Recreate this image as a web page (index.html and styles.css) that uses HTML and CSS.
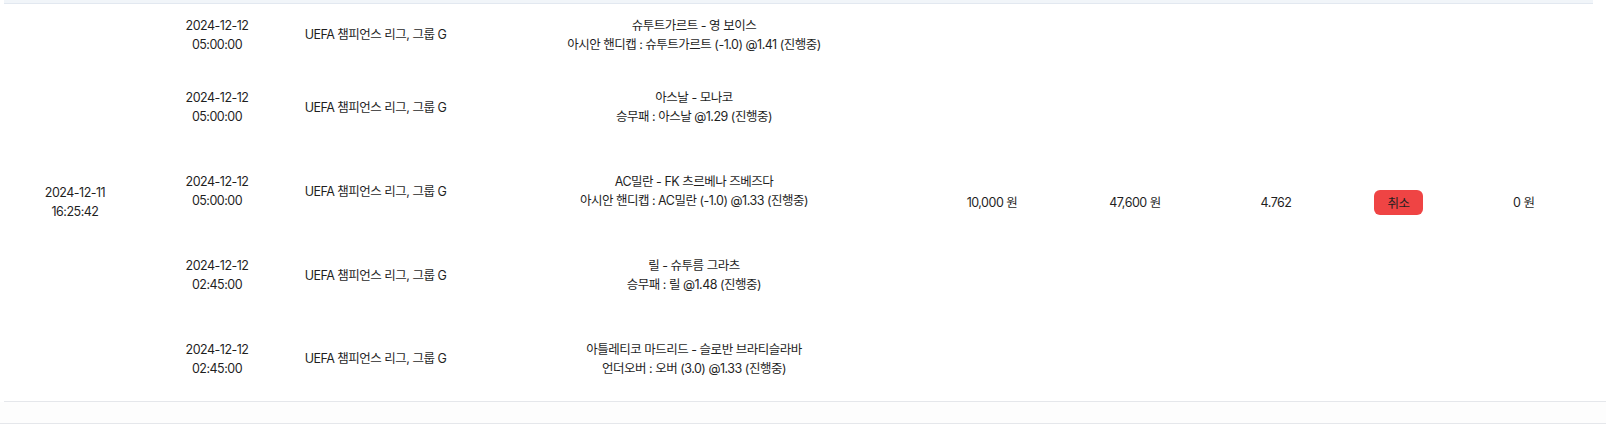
FILE: index.html
```html
<!DOCTYPE html>
<html lang="ko">
<head>
    <meta charset="UTF-8">
    <title>베팅 내역</title>
    <link rel="stylesheet" href="styles.css">
</head>
<body>
    <div class="history">
        <div class="head-edge"></div>
        <table class="bet-table">
            <colgroup>
                <col class="c-date">
                <col class="c-time">
                <col class="c-league">
                <col class="c-match">
                <col class="c-amount">
                <col class="c-win">
                <col class="c-odds">
                <col class="c-action">
                <col class="c-result">
            </colgroup>
            <tbody>
                <tr class="first">
                    <td rowspan="5">2024-12-11<br>16:25:42</td>
                    <td>2024-12-12<br>05:00:00</td>
                    <td>UEFA 챔피언스 리그, 그룹 G</td>
                    <td>슈투트가르트 - 영 보이스<br>아시안 핸디캡 : 슈투트가르트 (-1.0) @1.41 (진행중)</td>
                    <td rowspan="5">10,000 원</td>
                    <td rowspan="5">47,600 원</td>
                    <td rowspan="5">4.762</td>
                    <td rowspan="5"><button class="cancel-btn">취소</button></td>
                    <td rowspan="5" class="result">0 원</td>
                </tr>
                <tr>
                    <td>2024-12-12<br>05:00:00</td>
                    <td>UEFA 챔피언스 리그, 그룹 G</td>
                    <td>아스날 - 모나코<br>승무패 : 아스날 @1.29 (진행중)</td>
                </tr>
                <tr>
                    <td>2024-12-12<br>05:00:00</td>
                    <td>UEFA 챔피언스 리그, 그룹 G</td>
                    <td>AC밀란 - FK 츠르베나 즈베즈다<br>아시안 핸디캡 : AC밀란 (-1.0) @1.33 (진행중)</td>
                </tr>
                <tr>
                    <td>2024-12-12<br>02:45:00</td>
                    <td>UEFA 챔피언스 리그, 그룹 G</td>
                    <td>릴 - 슈투름 그라츠<br>승무패 : 릴 @1.48 (진행중)</td>
                </tr>
                <tr>
                    <td>2024-12-12<br>02:45:00</td>
                    <td>UEFA 챔피언스 리그, 그룹 G</td>
                    <td>아틀레티코 마드리드 - 슬로반 브라티슬라바<br>언더오버 : 오버 (3.0) @1.33 (진행중)</td>
                </tr>
            </tbody>
        </table>
    </div>
    <div class="footer-space"></div>
</body>
</html>
```

FILE: styles.css
```css
body {
    margin: 0;
    background: #fff;
    font-family: 'Inter', 'Noto Sans CJK KR', sans-serif;
    font-size: 12.5px;
    line-height: 19px;
    color: #1f1f1f;
    letter-spacing: -0.5px;
}

.history {
    margin-left: 4px;
    width: 1589px;
}

/* ujung bawah header tabel */
.head-edge {
    height: 3px;
    background-color: #f1f5f9;
    border-bottom: 1px solid #e2e8f0;
}

.bet-table {
    width: 100%;
    border-collapse: collapse;
    table-layout: fixed;
    border-bottom: 1px solid #e5e7eb;
}

.c-date { width: 142px; }
.c-time { width: 142px; }
.c-league { width: 175px; }
.c-match { width: 462px; }
.c-amount { width: 134px; }
.c-win { width: 152px; }
.c-odds { width: 130px; }
.c-action { width: 115px; }
.c-result { width: 187px; }

.bet-table td {
    padding: 0;
    text-align: center;
    vertical-align: middle;
    white-space: nowrap;
}

.bet-table tr {
    height: 84px;
}

.bet-table tr.first {
    height: 61px;
}

.bet-table td.result {
    text-align: left;
    padding-left: 57px;
}

.cancel-btn {
    font-family: inherit;
    font-size: 12.5px;
    letter-spacing: -0.5px;
    width: 49px;
    height: 25px;
    padding: 0;
    border: none;
    border-radius: 6px;
    background-color: #ef4444;
    color: #1f1f1f;
    cursor: pointer;
}

.footer-space {
    height: 21px;
    background: #fdfdfd;
    border-bottom: 1px solid #e5e7eb;
}
```
